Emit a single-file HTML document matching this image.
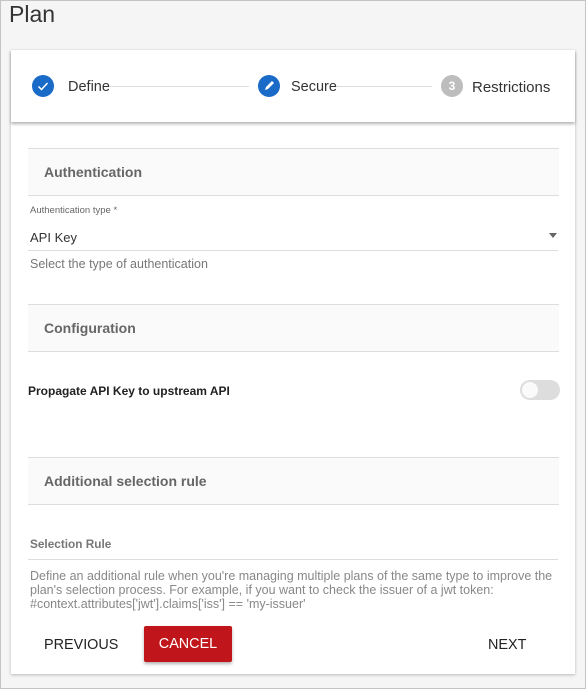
<!DOCTYPE html>
<html><head><style>
*{margin:0;padding:0;box-sizing:border-box}
body{width:586px;height:689px;background:#f5f5f5;font-family:"Liberation Sans",sans-serif;position:relative;overflow:hidden;box-shadow:inset 0 0 0 1px #c4c4c4}
.a{position:absolute;white-space:nowrap}
.card{position:absolute;left:11px;top:50px;width:564px;height:624px;background:#fff;box-shadow:0 1px 3px rgba(0,0,0,.25)}
.step{position:absolute;left:11px;top:50px;width:564px;height:72px;background:#fff;box-shadow:0 2px 3px rgba(0,0,0,.3)}
.c{position:absolute;width:22px;height:22px;border-radius:50%;top:75px}
.ln{position:absolute;height:1px;background:#ddd;top:86px}
.sec{position:absolute;left:28px;width:531px;height:48px;background:#fafafa;border-top:1px solid #ddd;border-bottom:1px solid #ddd;font-size:14px;font-weight:bold;color:#666;padding:15px 0 0 16px}
.ul{position:absolute;left:28px;width:530px;height:1px;background:#ddd}
</style></head><body>
<div class="a" style="left:9px;top:1px;font-size:23px;color:#333">Plan</div>
<div class="card"></div>
<div class="step"></div>
<div class="c" style="left:32px;background:#1a6ac8"><svg width="22" height="22"><path d="M6.5 11.5l3 3 6-6.5" stroke="#fff" stroke-width="1.5" fill="none"/></svg></div>
<div class="a" style="left:68px;top:79px;font-size:14.5px;color:#333">Define</div>
<div class="ln" style="left:110px;width:139px"></div>
<div class="c" style="left:258px;background:#1a6ac8"><svg width="22" height="22"><path d="M7 15l1-3 6-6 2 2-6 6z" fill="#fff"/></svg></div>
<div class="a" style="left:291px;top:79px;font-size:14.5px;color:#333">Secure</div>
<div class="ln" style="left:337px;width:95px"></div>
<div class="c" style="left:441px;background:#bdbdbd;color:#fff;font-size:12px;font-weight:bold;text-align:center;line-height:22px">3</div>
<div class="a" style="left:472px;top:79px;font-size:15px;color:#333">Restrictions</div>

<div class="sec" style="top:148px">Authentication</div>
<div class="a" style="left:30px;top:205px;font-size:9.5px;color:#666">Authentication type *</div>
<div class="a" style="left:30px;top:230px;font-size:13px;color:#333">API Key</div>
<div class="a" style="left:549px;top:233px;width:0;height:0;border-left:4px solid transparent;border-right:4px solid transparent;border-top:5px solid #666"></div>
<div class="ul" style="top:250px"></div>
<div class="a" style="left:30px;top:257px;font-size:12.5px;color:#777">Select the type of authentication</div>

<div class="sec" style="top:304px">Configuration</div>
<div class="a" style="left:28px;top:384px;font-size:12px;font-weight:bold;color:#222">Propagate API Key to upstream API</div>
<div class="a" style="left:520px;top:380px;width:40px;height:20px;border-radius:10px;background:#ddd"></div>
<div class="a" style="left:522px;top:382px;width:16px;height:16px;border-radius:50%;background:#fafafa"></div>

<div class="sec" style="top:457px">Additional selection rule</div>
<div class="a" style="left:30px;top:537px;font-size:11.8px;font-weight:bold;color:#777">Selection Rule</div>
<div class="ul" style="top:559px"></div>
<div class="a" style="left:30px;top:569px;font-size:12.5px;color:#888;line-height:14px">Define an additional rule when you're managing multiple plans of the same type to improve the<br>plan's selection process. For example, if you want to check the issuer of a jwt token:<br>#context.attributes['jwt'].claims['iss'] == 'my-issuer'</div>

<div class="a" style="left:44px;top:637px;font-size:14.4px;color:#222">PREVIOUS</div>
<div class="a" style="left:144px;top:626px;width:88px;height:36px;background:#c0161b;border-radius:2px;box-shadow:0 2px 3px rgba(0,0,0,.3);color:#fff;font-size:14.4px;text-align:center;line-height:36px">CANCEL</div>
<div class="a" style="left:488px;top:637px;font-size:14.4px;color:#222">NEXT</div>
</body></html>
